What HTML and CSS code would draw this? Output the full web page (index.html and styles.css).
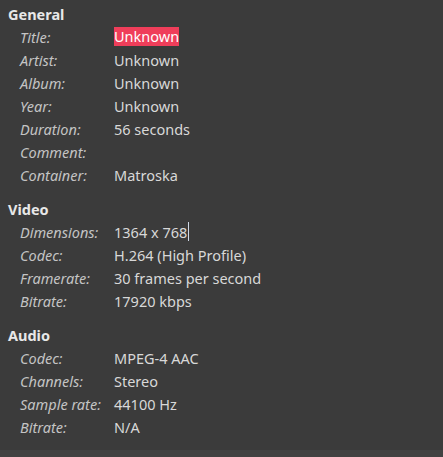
FILE: index.html
```html
<!DOCTYPE html>
<html>
<head>
<meta charset="utf-8">
<link rel="stylesheet" href="styles.css">
</head>
<body>
<div class="page">
  <section class="section">
    <h2 class="heading">General</h2>
    <div class="grid">
      <div class="label">Title:</div><div class="value"><span class="sel">Unknown</span></div>
      <div class="label">Artist:</div><div class="value">Unknown</div>
      <div class="label">Album:</div><div class="value">Unknown</div>
      <div class="label">Year:</div><div class="value">Unknown</div>
      <div class="label">Duration:</div><div class="value">56 seconds</div>
      <div class="label">Comment:</div><div class="value"></div>
      <div class="label">Container:</div><div class="value">Matroska</div>
    </div>
  </section>
  <section class="section">
    <h2 class="heading">Video</h2>
    <div class="grid">
      <div class="label">Dimensions:</div><div class="value">1364 x 768<span class="caret"></span></div>
      <div class="label">Codec:</div><div class="value">H.264 (High Profile)</div>
      <div class="label">Framerate:</div><div class="value">30 frames per second</div>
      <div class="label">Bitrate:</div><div class="value">17920 kbps</div>
    </div>
  </section>
  <section class="section">
    <h2 class="heading">Audio</h2>
    <div class="grid">
      <div class="label">Codec:</div><div class="value">MPEG-4 AAC</div>
      <div class="label">Channels:</div><div class="value">Stereo</div>
      <div class="label">Sample rate:</div><div class="value">44100 Hz</div>
      <div class="label">Bitrate:</div><div class="value">N/A</div>
    </div>
  </section>
  <div class="spacer"></div>
  <div class="bottombar"></div>
</div>
</body>
</html>
```
FILE: styles.css
```css
html, body {
  margin: 0;
  padding: 0;
  height: 100%;
  background: #3b3b3b;
}
body {
  font-family: "Noto Sans", "Open Sans", sans-serif;
  font-size: 14.5px;
  color: #d6d6d6;
}
.page {
  display: flex;
  flex-direction: column;
  height: 457px;
  padding-top: 3px;
  box-sizing: border-box;
}
.section {
  margin-bottom: 12px;
}
.heading {
  margin: 0;
  padding-left: 8px;
  font-size: 14.5px;
  font-weight: bold;
  line-height: 22px;
  color: #e8e8e8;
}
.grid {
  display: grid;
  grid-template-columns: 114px 1fr;
  grid-auto-rows: 23px;
  align-items: center;
}
.label {
  padding-left: 20px;
  font-style: italic;
  color: #c4c4c4;
  white-space: nowrap;
}
.value {
  color: #d8d8d8;
  white-space: nowrap;
  display: flex;
  align-items: center;
}
.sel {
  background: #ef3e5a;
  color: #ffffff;
  line-height: 19px;
}
.caret {
  display: inline-block;
  width: 1px;
  height: 19px;
  margin-left: 1px;
  background: #cfd8e6;
}
.spacer {
  flex: 1;
}
.bottombar {
  height: 9px;
  background: #424242;
}
```
